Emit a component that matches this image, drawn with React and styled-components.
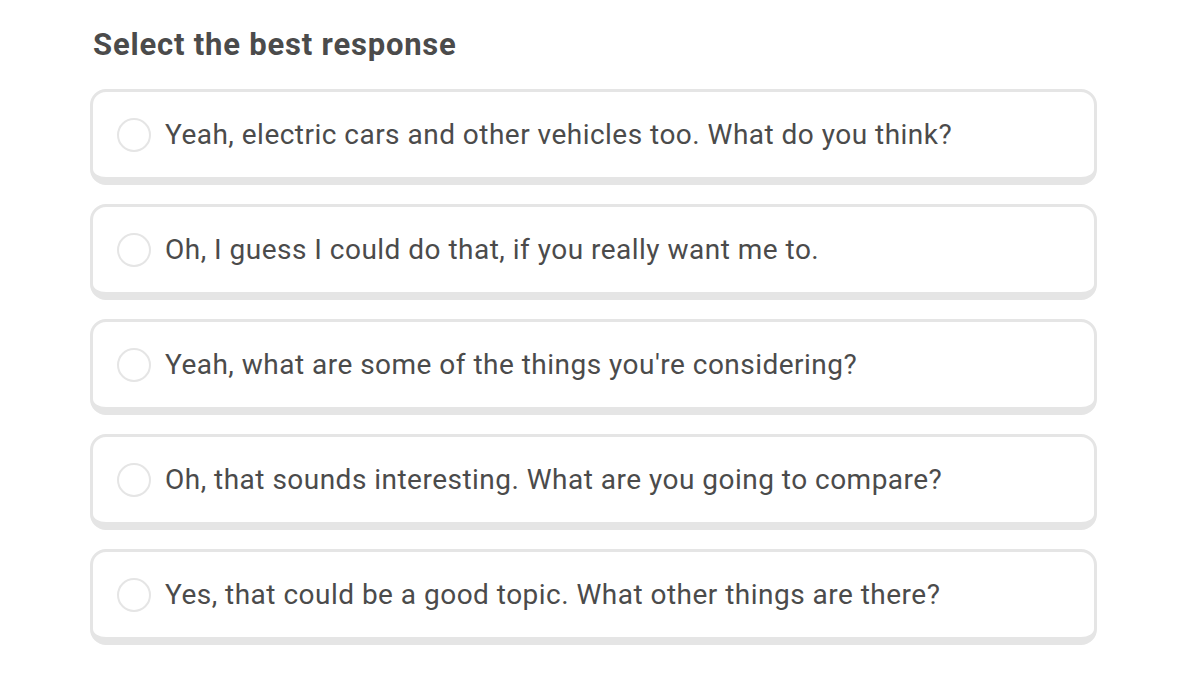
import React from "react";
import styled, { createGlobalStyle } from "styled-components";

const GlobalStyle = createGlobalStyle`
  body {
    margin: 0;
    background: #fff;
    font-family: Roboto, "Noto Sans", sans-serif;
  }
`;

const Page = styled.div`
  width: 1200px;
  height: 676px;
  box-sizing: border-box;
  padding: 25px 103px 0 90px;
`;

const Title = styled.h2`
  margin: 0 0 24px 3px;
  font-size: 31px;
  line-height: 40px;
  font-weight: 700;
  color: #4b4b4b;
  letter-spacing: 0.8px;
`;

const List = styled.div`
  display: flex;
  flex-direction: column;
  gap: 19px;
`;

const Option = styled.label`
  display: flex;
  align-items: center;
  gap: 14px;
  height: 96px;
  box-sizing: border-box;
  padding: 0 24px;
  border: 3px solid #e5e5e5;
  border-bottom-width: 8px;
  border-radius: 16px;
  cursor: pointer;
  background: #fff;
`;

const Radio = styled.span`
  flex: none;
  width: 34px;
  height: 34px;
  box-sizing: border-box;
  border: 2.5px solid #e5e5e5;
  border-radius: 50%;
`;

const Text = styled.span`
  font-size: 28px;
  color: #4b4b4b;
  letter-spacing: 0.48px;
`;

const options = [
  "Yeah, electric cars and other vehicles too. What do you think?",
  "Oh, I guess I could do that, if you really want me to.",
  "Yeah, what are some of the things you're considering?",
  "Oh, that sounds interesting. What are you going to compare?",
  "Yes, that could be a good topic. What other things are there?",
];

export default function App() {
  return (
    <Page>
      <GlobalStyle />
      <Title>Select the best response</Title>
      <List>
        {options.map((o) => (
          <Option key={o}>
            <Radio />
            <Text>{o}</Text>
          </Option>
        ))}
      </List>
    </Page>
  );
}
